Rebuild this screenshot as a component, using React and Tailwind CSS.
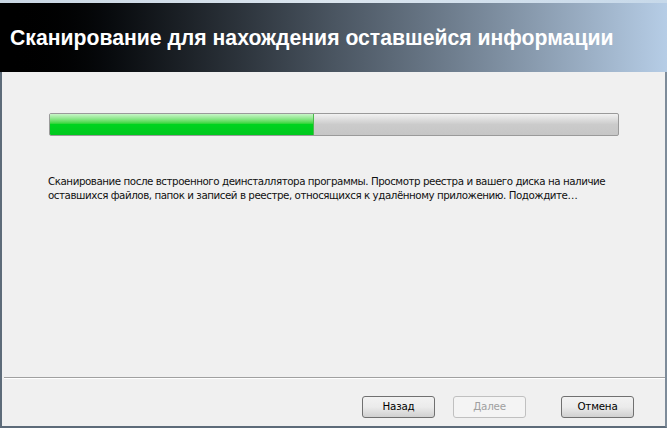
export default function App() {
  return (
    <div className="w-[667px] h-[428px] bg-[#f0f0f0] flex flex-col overflow-hidden" style={{ fontFamily: '"Liberation Sans", Arial, sans-serif' }}>
      <div className="h-[3px] bg-gradient-to-r from-[#c9d6e3] via-[#dbe5ee] to-[#c7d9ea]" />
      <div className="h-[69px] bg-gradient-to-r from-[#000000] via-[#4a5561] to-[#b6cde6] flex items-center pl-[10px] pt-[1px]">
        <h1 className="text-white font-bold text-[21.2px] leading-none">Сканирование для нахождения оставшейся информации</h1>
      </div>
      <div className="flex-1 flex flex-col border-l-2 border-r-2 border-b-2 border-[#5d6b79] border-r-[#7d8b99]">
        <div className="pl-[47px] pr-[46px] pt-[41px]">
          <div className="h-[23px] rounded-[2px] border border-[#9a9a9a] bg-gradient-to-b from-[#f2f2f2] via-[#cbcbcb] to-[#c6c6c6] flex overflow-hidden">
            <div className="w-[264px] h-full bg-gradient-to-b from-[#c8f5c8] via-[#00d31f] to-[#00c81e] border-r border-[#4bbb4b]" />
          </div>
        </div>
        <div className="pl-[46px] pt-[38px] leading-[14px] text-[#111] tracking-[-0.45px]" style={{ fontFamily: '"DejaVu Sans", Tahoma, sans-serif', fontSize: '10.3px' }}>
          <p>Сканирование после встроенного деинсталлятора программы. Просмотр реестра и вашего диска на наличие</p>
          <p>оставшихся файлов, папок и записей в реестре, относящихся к удалённому приложению. Подождите…</p>
        </div>
        <div className="flex-1" />
        <div className="ml-[2px] border-t border-[#a0a0a0] border-b border-b-white" />
        <div className="h-[47px] flex items-start justify-end pt-[17px] pr-[31px] tracking-[-0.2px]" style={{ fontFamily: '"DejaVu Sans", Tahoma, sans-serif', fontSize: '10.3px' }}>
          <button className="w-[73px] h-[22px] rounded-[3px] border border-[#707070] bg-gradient-to-b from-[#f2f2f2] via-[#ebebeb] to-[#d0d0d0] text-[#000]">Назад</button>
          <button className="ml-[18px] w-[73px] h-[22px] rounded-[3px] border border-[#c0c0c0] bg-[#f4f4f4] text-[#a0a0a0]">Далее</button>
          <button className="ml-[35px] w-[73px] h-[22px] rounded-[3px] border border-[#707070] bg-gradient-to-b from-[#f2f2f2] via-[#ebebeb] to-[#d0d0d0] text-[#000]">Отмена</button>
        </div>
      </div>
    </div>
  );
}
